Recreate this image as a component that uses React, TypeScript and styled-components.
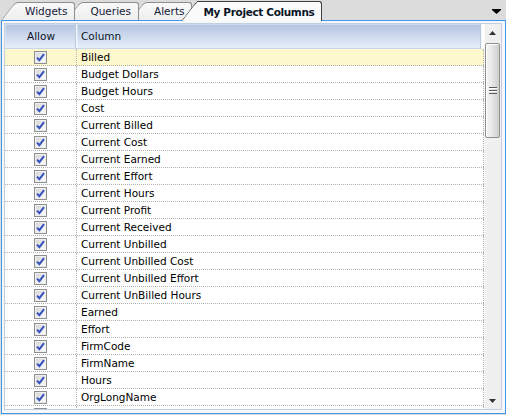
import { FC } from "react"
import styled, { createGlobalStyle } from "styled-components"

const columns = [
  "Billed",
  "Budget Dollars",
  "Budget Hours",
  "Cost",
  "Current Billed",
  "Current Cost",
  "Current Earned",
  "Current Effort",
  "Current Hours",
  "Current Profit",
  "Current Received",
  "Current Unbilled",
  "Current Unbilled Cost",
  "Current Unbilled Effort",
  "Current UnBilled Hours",
  "Earned",
  "Effort",
  "FirmCode",
  "FirmName",
  "Hours",
  "OrgLongName",
  "",
]

const tabs = ["Widgets", "Queries", "Alerts", "My Project Columns"]
const activeTab = 3

const GlobalStyle = createGlobalStyle`
  html, body {
    margin: 0;
    padding: 0;
    background: #dcdcdc;
  }
  body {
    font-family: "DejaVu Sans", Verdana, sans-serif;
    font-size: 10.5px;
    color: #000;
  }
`

const Frame = styled.div`
  width: 506px;
  height: 415px;
  background: #dcdcdc;
  display: flex;
  flex-direction: column;
  overflow: hidden;
`

const TabStrip = styled.div`
  height: 20px;
  display: flex;
  align-items: flex-end;
  padding-left: 1px;
  position: relative;
  z-index: 2;
`

const Tab = styled.div<{ $active?: boolean; $z: number }>`
  position: relative;
  z-index: ${(p) => (p.$active ? 20 : p.$z)};
  height: ${(p) => (p.$active ? 20 : 18)}px;
  margin-bottom: ${(p) => (p.$active ? -1 : 0)}px;
  margin-left: ${(p) => (p.$active ? -11 : -9)}px;
  padding: 0 8px 0 ${(p) => (p.$active ? 22 : 24)}px;
  box-sizing: border-box;
  display: flex;
  align-items: center;
  white-space: nowrap;
  font-weight: ${(p) => (p.$active ? "bold" : "normal")};
  letter-spacing: ${(p) => (p.$active ? "-0.35px" : "0")};
  color: ${(p) => (p.$active ? "#0c1528" : "#14203a")};
  padding-top: ${(p) => (p.$active ? 1 : 0)}px;

  &:first-child {
    margin-left: 0;
  }

  &::before,
  &::after {
    content: "";
    position: absolute;
    top: 0;
    bottom: 0;
    z-index: -1;
    background: ${(p) =>
      p.$active ? "#fbfbfb" : "linear-gradient(#f9f9f9, #eeeeee)"};
    border-top: 1px solid ${(p) => (p.$active ? "#3e3e3e" : "#8e8e8e")};
  }

  &::before {
    left: 0;
    width: 22px;
    border-left: 1px solid ${(p) => (p.$active ? "#3e3e3e" : "#8e8e8e")};
    border-top-left-radius: 4px;
    transform-origin: bottom left;
    transform: skewX(-38deg);
  }

  &::after {
    left: 16px;
    right: 0;
    border-right: 1px solid ${(p) => (p.$active ? "#3e3e3e" : "#8e8e8e")};
    border-top-right-radius: 3px;
  }
`

const DropButton = styled.div`
  margin-left: auto;
  width: 14px;
  height: 20px;
  display: flex;
  align-items: center;
  justify-content: flex-start;
  padding-top: 3px;
  box-sizing: border-box;
`

const Panel = styled.div`
  margin-left: 1px;
  width: 505px;
  height: 394px;
  box-sizing: border-box;
  border: 1px solid #3d98f0;
  background: #f7f7f7;
  padding: 2px 3px 3px 2px;
  display: flex;
  position: relative;
  z-index: 1;
`

const Grid = styled.div`
  flex: 1;
  display: flex;
  border: 1px solid #c2cfe2;
  background: #fff;
  min-width: 0;
`

const Body = styled.div`
  flex: 1;
  display: flex;
  flex-direction: column;
  overflow: hidden;
  min-width: 0;
`

const HeaderRow = styled.div`
  height: 25px;
  flex: none;
  display: flex;
  box-sizing: border-box;
  border-bottom: 1px solid #c9d6e9;
  background: linear-gradient(#b2c4df, #e7eefa);
  margin-right: 2px;
`

const HeaderCell = styled.div<{ $width?: number; $center?: boolean }>`
  ${(p) => (p.$width ? `width: ${p.$width}px; flex: none;` : "flex: 1;")}
  display: flex;
  align-items: center;
  justify-content: ${(p) => (p.$center ? "center" : "flex-start")};
  padding-left: ${(p) => (p.$center ? 0 : 4)}px;
  box-sizing: border-box;
  color: #0c1528;
  box-shadow: inset -1px 0 0 #f4f8fd, inset -2px 0 0 #b8c8df,
    inset 1px 1px 0 rgba(255, 255, 255, 0.35);
`

const Row = styled.div<{ $selected?: boolean }>`
  height: 17px;
  flex: none;
  display: flex;
  box-sizing: border-box;
  border-bottom: 1px dotted #b1b1b1;
  background: ${(p) => (p.$selected ? "#fef8cd" : "#fff")};
`

const CheckCell = styled.div`
  width: 72px;
  flex: none;
  box-sizing: border-box;
  border-right: 1px dotted #b1b1b1;
  display: flex;
  align-items: center;
  justify-content: center;
  padding-right: 1px;
`

const NameCell = styled.div`
  flex: 1;
  box-sizing: border-box;
  border-right: 1px dotted #b1b1b1;
  display: flex;
  align-items: center;
  padding-left: 4px;
  white-space: nowrap;
`

const CheckBox = styled.div`
  width: 13px;
  height: 13px;
  box-sizing: border-box;
  border: 1px solid #8e8f8f;
  background: linear-gradient(135deg, #d3d3d3, #f2f2f2 70%, #fff);
  box-shadow: inset 0 0 0 1px #f0f0f0;
  display: flex;
  align-items: center;
  justify-content: center;
`

const ScrollBar = styled.div`
  width: 17px;
  flex: none;
  display: flex;
  flex-direction: column;
  background: #f0f0f0;
  box-shadow: inset 1px 0 0 #f7f7f7;
`

const ArrowButton = styled.div`
  height: 17px;
  flex: none;
  display: flex;
  align-items: center;
  justify-content: center;
`

const Thumb = styled.div`
  margin: 2px 1px 0 1px;
  height: 95px;
  flex: none;
  box-sizing: border-box;
  border: 1px solid #8f8f8f;
  border-radius: 2px;
  background: linear-gradient(to right, #f5f5f5, #e8e8e8 45%, #cdcdcd);
  box-shadow: inset 1px 1px 0 #fff;
  display: flex;
  align-items: center;
  justify-content: center;
`

const Track = styled.div`
  flex: 1;
`

const Check: FC = () => (
  <svg width="9" height="9" viewBox="0 0 9 9">
    <polyline
      points="1,4.6 3.4,7.2 8,1.2"
      fill="none"
      stroke="#3551bd"
      strokeWidth="2"
      strokeLinejoin="miter"
    />
  </svg>
)

const Grip: FC = () => (
  <svg width="8" height="7" viewBox="0 0 8 7">
    <rect x="0" y="0" width="8" height="1" fill="#5a5a5a" />
    <rect x="0" y="1" width="8" height="1" fill="#ffffff" />
    <rect x="0" y="3" width="8" height="1" fill="#5a5a5a" />
    <rect x="0" y="4" width="8" height="1" fill="#ffffff" />
    <rect x="0" y="6" width="8" height="1" fill="#5a5a5a" />
  </svg>
)

const UpArrow: FC = () => (
  <svg width="7" height="4" viewBox="0 0 7 4">
    <polygon points="3.5,0 7,4 0,4" fill="#333" />
  </svg>
)

const DownArrow: FC = () => (
  <svg width="7" height="4" viewBox="0 0 7 4">
    <polygon points="0,0 7,0 3.5,4" fill="#333" />
  </svg>
)

const MenuArrow: FC = () => (
  <svg width="9" height="5" viewBox="0 0 9 5">
    <rect x="0" y="0" width="9" height="1" fill="#000" />
    <polygon points="0,1 9,1 4.5,5" fill="#000" />
  </svg>
)

export default function App() {
  return (
    <>
      <GlobalStyle />
      <Frame>
        <TabStrip>
          {tabs.map((t, i) => (
            <Tab key={t} $active={i === activeTab} $z={tabs.length - i}>
              {t}
            </Tab>
          ))}
          <DropButton>
            <MenuArrow />
          </DropButton>
        </TabStrip>
        <Panel>
          <Grid>
            <Body>
              <HeaderRow>
                <HeaderCell $width={72} $center>
                  Allow
                </HeaderCell>
                <HeaderCell>Column</HeaderCell>
              </HeaderRow>
              {columns.map((c, i) => (
                <Row key={i} $selected={i === 0}>
                  <CheckCell>
                    <CheckBox>
                      <Check />
                    </CheckBox>
                  </CheckCell>
                  <NameCell>{c}</NameCell>
                </Row>
              ))}
            </Body>
            <ScrollBar>
              <ArrowButton>
                <UpArrow />
              </ArrowButton>
              <Thumb>
                <Grip />
              </Thumb>
              <Track />
              <ArrowButton>
                <DownArrow />
              </ArrowButton>
            </ScrollBar>
          </Grid>
        </Panel>
      </Frame>
    </>
  )
}
